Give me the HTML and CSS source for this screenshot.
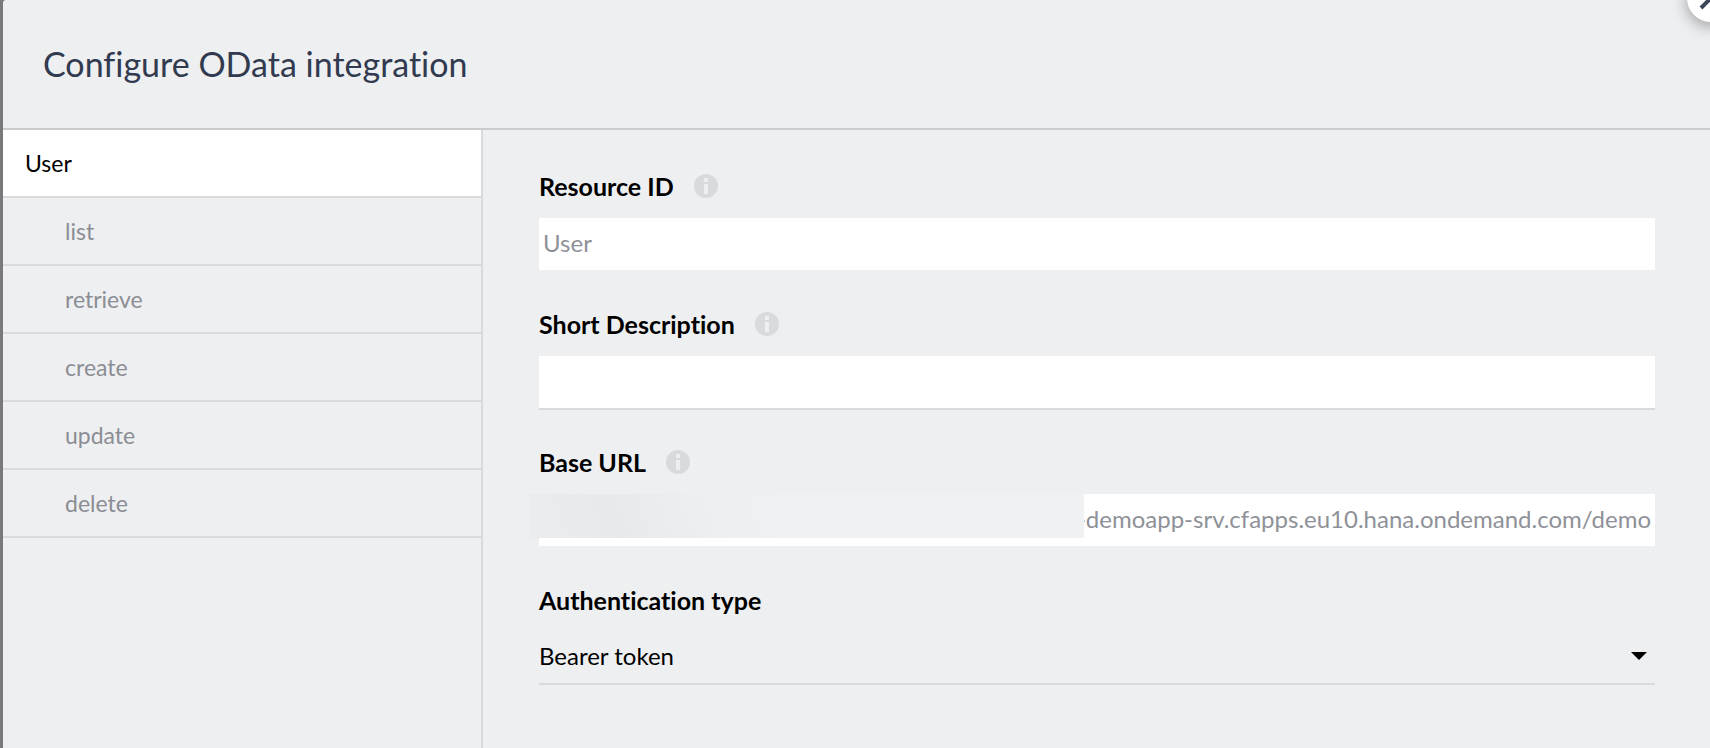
FILE: index.html
```
<!DOCTYPE html>
<html lang="en">
<head>
<meta charset="utf-8">
<title>Configure OData integration</title>
<link rel="stylesheet" href="styles.css">
</head>
<body>
<div class="dialog" role="dialog" aria-labelledby="dialog-title">
  <button class="close" type="button" aria-label="Close">
    <svg viewBox="0 0 24 24" width="24" height="24" aria-hidden="true"><path d="M2 2 22 22M22 2 2 22" fill="none" stroke="#3b4658" stroke-width="4"/></svg>
  </button>
  <header class="header">
    <h1 class="title" id="dialog-title">Configure OData integration</h1>
  </header>
  <div class="body">
    <nav class="sidebar">
      <a class="item item-active" href="#user">User</a>
      <a class="item item-child" href="#list">list</a>
      <a class="item item-child" href="#retrieve">retrieve</a>
      <a class="item item-child" href="#create">create</a>
      <a class="item item-child" href="#update">update</a>
      <a class="item item-child" href="#delete">delete</a>
    </nav>
    <form class="form">
      <div class="field">
        <div class="label-row">
          <label class="label" for="resource-id">Resource ID</label>
          <svg class="info" viewBox="0 0 24 24" aria-hidden="true"><circle cx="12" cy="12" r="12" fill="#d8dadd"/><path d="M10 4h4v4h-4zM10 10h4v10h-4z" fill="#eeeff1"/></svg>
        </div>
        <input class="input input-locked" id="resource-id" type="text" value="User" readonly>
      </div>
      <div class="field">
        <div class="label-row">
          <label class="label" for="description">Short Description</label>
          <svg class="info" viewBox="0 0 24 24" aria-hidden="true"><circle cx="12" cy="12" r="12" fill="#d8dadd"/><path d="M10 4h4v4h-4zM10 10h4v10h-4z" fill="#eeeff1"/></svg>
        </div>
        <input class="input" id="description" type="text">
      </div>
      <div class="field">
        <div class="label-row">
          <label class="label" for="base-url">Base URL</label>
          <svg class="info" viewBox="0 0 24 24" aria-hidden="true"><circle cx="12" cy="12" r="12" fill="#d8dadd"/><path d="M10 4h4v4h-4zM10 10h4v10h-4z" fill="#eeeff1"/></svg>
        </div>
        <div class="masked">
          <input class="input input-locked input-url" id="base-url" type="text" value="-demoapp-srv.cfapps.eu10.hana.ondemand.com/demo" readonly>
          <span class="mask"></span>
        </div>
      </div>
      <div class="field">
        <div class="label-row">
          <label class="label" for="auth-type">Authentication type</label>
        </div>
        <div class="select-wrap">
          <select class="select" id="auth-type"><option>Bearer token</option></select>
          <svg class="arrow" viewBox="0 0 16 8" aria-hidden="true"><path d="M0 0h16L8 8z"/></svg>
        </div>
      </div>
    </form>
  </div>
</div>
</body>
</html>
```

FILE: styles.css
```
* {
  box-sizing: border-box;
}

body {
  margin: 0;
  padding-left: 3px;
  background: #79797b;
  font-family: Lato, "Liberation Sans", sans-serif;
  font-variant-ligatures: none;
  overflow: hidden;
}

.dialog {
  position: relative;
  display: flex;
  flex-direction: column;
  min-height: 100vh;
  background: #eeeff1;
  border-top-left-radius: 3px;
}

.close {
  position: absolute;
  top: -26px;
  right: -25px;
  display: grid;
  place-items: center;
  width: 48px;
  height: 48px;
  padding: 0;
  border: 0;
  border-radius: 50%;
  background: #fff;
  box-shadow: 0 4px 16px rgba(0, 0, 0, 0.35);
}

.header {
  padding: 44px 40px;
  border-bottom: 2px solid #c9cbcd;
}

.title {
  margin: 0;
  font-size: 34px;
  line-height: 40px;
  font-weight: 400;
  color: #313a4e;
}

.body {
  display: flex;
  flex: 1;
}

.sidebar {
  flex: 0 1 480px;
  min-width: 160px;
  border-right: 2px solid #d8dadc;
}

.item {
  display: block;
  padding: 20px 22px;
  border-bottom: 2px solid #d8dadc;
  font-size: 23px;
  line-height: 26px;
  color: #8b8d94;
  text-decoration: none;
}

.item-active {
  background: #fff;
  color: #000;
}

.item-child {
  padding-left: 62px;
}

.form {
  display: flex;
  flex: 1;
  flex-direction: column;
  gap: 40px;
  padding: 44px 55px 40px 56px;
}

.field {
  display: flex;
  flex-direction: column;
  gap: 20px;
}

.label-row {
  display: flex;
  align-items: center;
  gap: 20px;
  height: 24px;
}

.label {
  font-size: 25px;
  line-height: 24px;
  font-weight: 700;
  color: #000;
}

.info {
  width: 24px;
  height: 24px;
}

.input {
  display: block;
  width: 100%;
  height: 54px;
  padding: 0 4px 4px;
  border: 0;
  border-bottom: 2px solid #d8dadc;
  border-radius: 0;
  background: #fff;
  background-clip: padding-box;
  font: inherit;
  font-size: 24px;
  font-variant-ligatures: none;
  color: #000;
}

.input-locked {
  border-bottom-color: transparent;
  color: #8f9198;
}

.input-url {
  text-align: right;
}

.masked,
.select-wrap {
  position: relative;
}

.mask {
  position: absolute;
  top: 0;
  left: -9px;
  right: 571px;
  height: 44px;
  background: linear-gradient(70deg, #ebecee 0%, #e8e9eb 16%, #eeeff1 34%, #f0f1f3 52%);
}

.select {
  display: block;
  width: 100%;
  height: 53px;
  padding: 0 40px 4px 0;
  border: 0;
  border-bottom: 2px solid #d8dadc;
  border-radius: 0;
  appearance: none;
  background: transparent;
  font: inherit;
  font-size: 24px;
  color: #000;
}

.arrow {
  position: absolute;
  top: 20px;
  right: 8px;
  width: 16px;
  height: 8px;
  pointer-events: none;
}
```
